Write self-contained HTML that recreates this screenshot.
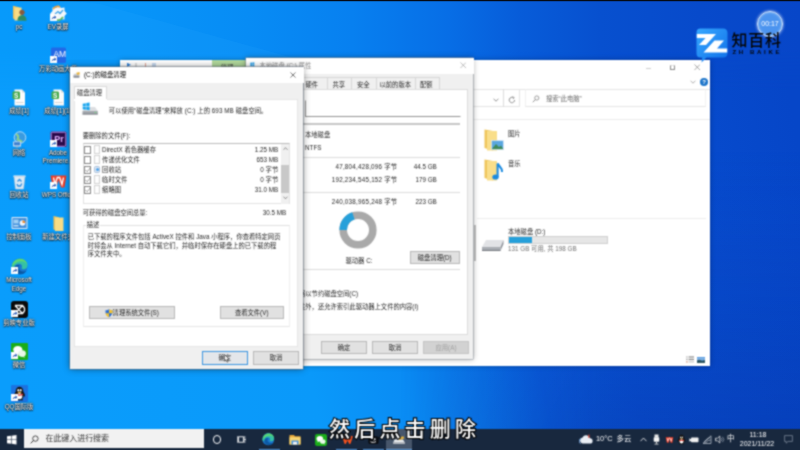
<!DOCTYPE html>
<html lang="zh-CN">
<head>
<meta charset="utf-8">
<title>磁盘清理</title>
<style>
*{box-sizing:border-box;margin:0;padding:0}
html,body{width:800px;height:450px;overflow:hidden}
body{position:relative;font-family:"Liberation Sans","Noto Sans CJK SC",sans-serif;font-size:6.3px;color:#262626;
 background:#0a5fd8;}
.abs{position:absolute}
#stage{position:absolute;left:0;top:0;width:800px;height:450px;filter:url(#soft)}
#bg{position:absolute;left:0;top:0;width:800px;height:450px}
.t{position:absolute;white-space:nowrap;line-height:1}
.ico{position:absolute;width:17px;height:17px}
.lbl{position:absolute;width:60px;text-align:center;color:#fff;font-size:6.3px;line-height:8.5px;text-shadow:0 0 1px #000,0 0 2px rgba(0,0,0,.9),0 0.6px 1.2px #000;white-space:nowrap}
.win{position:absolute;background:#f0f0f0}
.btn{position:absolute;background:#e1e1e1;border:0.6px solid #b8b8b8;text-align:center;font-size:6.3px;line-height:12px;height:13.5px;color:#262626;white-space:nowrap}
.cb{position:absolute;width:7.5px;height:7.5px;border:0.5px solid #858585;background:#fff}
.doc{position:absolute;width:5.6px;height:8.4px;background:#fdfdfd;border:0.5px solid #d2d2d2}
</style>
</head>
<body>
<!-- wallpaper -->
<svg id="bg" viewBox="0 0 800 450">
 <defs>
  <linearGradient id="g1" gradientUnits="userSpaceOnUse" x1="0" y1="296" x2="800" y2="154">
   <stop offset="0" stop-color="#0a9dfc"/>
   <stop offset="0.36" stop-color="#0a99fa"/>
   <stop offset="0.47" stop-color="#0a8cf4"/>
   <stop offset="0.56" stop-color="#0a74e7"/>
   <stop offset="0.64" stop-color="#095cdb"/>
   <stop offset="0.75" stop-color="#0850d2"/>
   <stop offset="1" stop-color="#0646c8"/>
  </linearGradient>
  <linearGradient id="gt" gradientUnits="userSpaceOnUse" x1="0" y1="0" x2="800" y2="0">
   <stop offset="0" stop-color="#079afb"/>
   <stop offset="0.125" stop-color="#0797fa"/>
   <stop offset="0.31" stop-color="#078cf5"/>
   <stop offset="0.44" stop-color="#0780f0"/>
   <stop offset="0.56" stop-color="#076ee6"/>
   <stop offset="0.65" stop-color="#075cd9"/>
   <stop offset="0.75" stop-color="#0750cf"/>
   <stop offset="0.875" stop-color="#074acb"/>
   <stop offset="1" stop-color="#0746c8"/>
  </linearGradient>
  <linearGradient id="gm" x1="0" y1="0" x2="0" y2="1"><stop offset="0.55" stop-color="#fff"/><stop offset="1" stop-color="#000"/></linearGradient>
  <mask id="mt"><rect width="800" height="90" fill="url(#gm)"/></mask>
  <linearGradient id="g2" x1="0" y1="0" x2="0" y2="1">
   <stop offset="0" stop-color="#0a40c0" stop-opacity="0"/>
   <stop offset="1" stop-color="#062c98" stop-opacity="0.34"/>
  </linearGradient>
  <linearGradient id="g4" x1="0" y1="0" x2="1" y2="0"><stop offset="0.5" stop-color="#000"/><stop offset="0.75" stop-color="#fff"/></linearGradient>
  <mask id="mk"><rect width="800" height="450" fill="url(#g4)"/></mask>
  <linearGradient id="g3" gradientUnits="userSpaceOnUse" x1="0" y1="60" x2="60" y2="0">
   <stop offset="0.3" stop-color="#30b0ff" stop-opacity="0.22"/>
   <stop offset="1" stop-color="#30b0ff" stop-opacity="0"/>
  </linearGradient>
 </defs>
 <rect width="800" height="450" fill="url(#g1)"/>
 <rect width="800" height="90" fill="url(#gt)" mask="url(#mt)"/>
 <polygon points="60,0 100,4 300,60 60,60" fill="#2aaaff" opacity="0.16"/>
 <rect x="0" y="150" width="800" height="300" fill="url(#g2)" mask="url(#mk)"/>
 <rect width="800" height="1.2" fill="#050a14"/>
</svg>

<svg width="0" height="0" style="position:absolute"><filter id="soft" x="0" y="0" width="1" height="1" color-interpolation-filters="sRGB"><feConvolveMatrix order="3" kernelMatrix="1 2 1 2 6 2 1 2 1" divisor="18" edgeMode="duplicate"/></filter></svg>
<div id="stage">
<!-- DESKTOP SHORTCUTS -->
<div class="ico" style="left:10.5px;top:4.5px"><svg width="17" height="17" viewBox="0 0 17 17"><path d="M2 0.8L8 2.2V15.5L2 13.5Z" fill="#eec25a"/><path d="M3.5 2.5H10.5V15.5H3.5Z" fill="#f8dc85"/><circle cx="11" cy="7.3" r="2.6" fill="#8a5a3c"/><path d="M6.5 15.8C6.5 11.8 8.5 10.3 11 10.3C13.5 10.3 15.5 11.8 15.5 15.8Z" fill="#2f8a62"/></svg></div><div class="lbl" style="left:-11px;top:22.5px">pc</div>
<div class="ico" style="left:49.5px;top:4.5px"><svg width="17" height="17" viewBox="0 0 17 17"><path d="M8.5 0.5L11 3L14.5 2.5L14.5 6L16.8 8.5L14.5 11L14.5 14.5L11 14L8.5 16.5L6 14L2.5 14.5L2.5 11L0.2 8.5L2.5 6L2.5 2.5L6 3Z" fill="#f4f8fb"/><path d="M3 4C5 1.5 8 1 10 2" stroke="#f2a13a" stroke-width="1.6" fill="none"/><path d="M13 12C11 15 8 15.5 6 14.5" stroke="#5cb85c" stroke-width="1.6" fill="none"/><path d="M5 9L8 6.5L10 8.5L13 5" stroke="#3aa0e8" stroke-width="1.2" fill="none"/></svg><svg style="position:absolute;left:0.2px;top:9px" width="7" height="7" viewBox="0 0 7 7"><rect width="7" height="7" fill="#fff"/><path d="M1.5 5.8C1.8 3.8 3 2.8 4.6 2.8V1.3L6.3 3.3L4.6 5.1V3.9C3.3 3.9 2.3 4.5 1.5 5.8Z" fill="#1b4fb0"/></svg></div><div class="lbl" style="left:28px;top:22.5px">EV录屏</div>
<div class="ico" style="left:49.5px;top:46.5px"><svg width="17" height="17" viewBox="0 0 17 17"><rect x="1" y="0.5" width="15" height="15.5" rx="1.5" fill="#2268e6"/><text x="9.8" y="9.5" font-family="Liberation Sans,sans-serif" font-size="8.5" fill="#fff" text-anchor="middle">AM</text></svg><svg style="position:absolute;left:0.2px;top:9px" width="7" height="7" viewBox="0 0 7 7"><rect width="7" height="7" fill="#fff"/><path d="M1.5 5.8C1.8 3.8 3 2.8 4.6 2.8V1.3L6.3 3.3L4.6 5.1V3.9C3.3 3.9 2.3 4.5 1.5 5.8Z" fill="#1b4fb0"/></svg></div><div class="lbl" style="left:28px;top:64.5px">万彩动画大师</div>
<div class="ico" style="left:10.5px;top:88.5px"><svg width="17" height="17" viewBox="0 0 17 17"><path d="M3.5 0.5H11L14 3.5V16.5H3.5Z" fill="#fbfbfb"/><path d="M11 0.5V3.5H14Z" fill="#dcdcdc"/><rect x="1.5" y="2.5" width="7.5" height="7.5" rx="1.2" fill="#43a84a"/><text x="5.2" y="8.6" font-family="Liberation Sans,sans-serif" font-size="6.5" font-weight="bold" fill="#fff" text-anchor="middle">S</text><path d="M5 13.5H12.5" stroke="#d5d5d5" stroke-width="1"/></svg></div><div class="lbl" style="left:-11px;top:106.5px">成绩[1]</div>
<div class="ico" style="left:49.5px;top:88.5px"><svg width="17" height="17" viewBox="0 0 17 17"><path d="M3.5 0.5H11L14 3.5V16.5H3.5Z" fill="#fbfbfb"/><path d="M11 0.5V3.5H14Z" fill="#dcdcdc"/><rect x="1.5" y="2.5" width="7.5" height="7.5" rx="1.2" fill="#43a84a"/><text x="5.2" y="8.6" font-family="Liberation Sans,sans-serif" font-size="6.5" font-weight="bold" fill="#fff" text-anchor="middle">S</text><path d="M5 13.5H12.5" stroke="#d5d5d5" stroke-width="1"/></svg></div><div class="lbl" style="left:28px;top:106.5px">成绩[1](1)</div>
<div class="ico" style="left:10.5px;top:130.5px"><svg width="17" height="17" viewBox="0 0 17 17"><circle cx="9" cy="6.5" r="5.8" fill="#3a9be0"/><path d="M5 3C7 4 8 6 6.5 8.5C8 9.5 10 9 11 11" stroke="#8fd08a" stroke-width="2" fill="none"/><ellipse cx="9" cy="6.5" rx="5.8" ry="5.8" fill="none" stroke="#d6ecfa" stroke-width="0.8"/><rect x="2" y="10.5" width="8" height="5" rx="0.6" fill="#dfe8f2"/><rect x="2.8" y="11.2" width="6.4" height="3.2" fill="#3b7fd0"/><rect x="4.5" y="15.5" width="3" height="1" fill="#aab4c0"/></svg></div><div class="lbl" style="left:-11px;top:148.5px">网络</div>
<div class="ico" style="left:49.5px;top:130.5px"><svg width="17" height="17" viewBox="0 0 17 17"><rect x="0.5" y="0.5" width="16" height="15.5" rx="1.5" fill="#2a0a4a"/><rect x="1.2" y="1.2" width="14.6" height="14.1" rx="1.2" fill="none" stroke="#d9a0ff" stroke-width="0.9"/><text x="9" y="11.2" font-family="Liberation Sans,sans-serif" font-size="9" font-weight="bold" fill="#e3b4ff" text-anchor="middle">Pr</text></svg><svg style="position:absolute;left:0.2px;top:9px" width="7" height="7" viewBox="0 0 7 7"><rect width="7" height="7" fill="#fff"/><path d="M1.5 5.8C1.8 3.8 3 2.8 4.6 2.8V1.3L6.3 3.3L4.6 5.1V3.9C3.3 3.9 2.3 4.5 1.5 5.8Z" fill="#1b4fb0"/></svg></div><div class="lbl" style="left:28px;top:148.5px">Adobe<br>Premiere...</div>
<div class="ico" style="left:10.5px;top:173px"><svg width="17" height="17" viewBox="0 0 17 17"><path d="M3 3.5H14L12.5 16H4.5Z" fill="#e9eff5" opacity="0.95"/><path d="M2.5 2.5H14.5V4H2.5Z" fill="#f7fafc"/><path d="M3 3.5H14L12.5 16H4.5Z" fill="none" stroke="#b8c6d4" stroke-width="0.6"/><path d="M6.5 8.5L8.5 6.5L10.5 8.5M10.8 10.5L9.5 13H7L6 11" stroke="#2c8de0" stroke-width="1.3" fill="none"/></svg></div><div class="lbl" style="left:-11px;top:191.0px">回收站</div>
<div class="ico" style="left:49.5px;top:173px"><svg width="17" height="17" viewBox="0 0 17 17"><path d="M0.5 2.5H16.5L14.5 14.5H11L8.5 7L6.5 14.5H3Z" fill="#f03a22"/><path d="M3.5 4.5L5 11.5L7.3 4.5H9.7L12 11.5L13.5 4.5" stroke="#fff" stroke-width="1.3" fill="none"/></svg><svg style="position:absolute;left:0.2px;top:9px" width="7" height="7" viewBox="0 0 7 7"><rect width="7" height="7" fill="#fff"/><path d="M1.5 5.8C1.8 3.8 3 2.8 4.6 2.8V1.3L6.3 3.3L4.6 5.1V3.9C3.3 3.9 2.3 4.5 1.5 5.8Z" fill="#1b4fb0"/></svg></div><div class="lbl" style="left:28px;top:191.0px">WPS Office</div>
<div class="ico" style="left:10.5px;top:215px"><svg width="17" height="17" viewBox="0 0 17 17"><rect x="0.5" y="2" width="16" height="12" rx="0.8" fill="#dfeaf6"/><rect x="1.5" y="3" width="14" height="10" fill="#3f8fdc"/><rect x="2.5" y="4.5" width="5" height="4" fill="#9fd0f5"/><circle cx="11.5" cy="8" r="2.8" fill="#f2f6fa"/><path d="M11.5 8V5.2A2.8 2.8 0 0 1 14.3 8Z" fill="#ef8a2c"/><rect x="2.5" y="10" width="5" height="1.5" fill="#bfe0f8"/></svg></div><div class="lbl" style="left:-11px;top:233.0px">控制面板</div>
<div class="ico" style="left:49.5px;top:215px"><svg width="17" height="17" viewBox="0 0 17 17"><path d="M3.5 1L9 2.2V16L3.5 14.5Z" fill="#eec25a"/><path d="M5 2.5H13.5V16H5Z" fill="#f8dc85"/></svg></div><div class="lbl" style="left:28px;top:233.0px">新建文件夹</div>
<div class="ico" style="left:10.5px;top:258px"><svg width="17" height="17" viewBox="0 0 17 17"><circle cx="8.5" cy="8.5" r="8" fill="#1a78d0"/><path d="M0.7 9.5C0.5 4 4.5 0.5 9 0.5C13.5 0.5 16.5 4 16.5 7.5C16.5 10 14.8 11.3 12.8 11.3C11 11.3 10.3 10.4 10.8 9.5C11.6 8 10.5 5.8 8 5.8C4.5 5.8 2.8 8.5 3.3 11.5C1.6 10.8 0.8 10.2 0.7 9.5Z" fill="#35c1a5"/><path d="M3.2 10.5C3.2 14 6.5 16.5 10 16.3C12.5 16.1 14.5 14.8 15.6 12.8C13.5 14 10 13.8 8.3 11.8C7 10.2 7.3 8 8.8 7C5.5 6.5 3.2 8 3.2 10.5Z" fill="#0c59a4"/><path d="M1.5 6C3 2 7 0.5 10.5 1C14 1.7 16.3 4.5 16.4 7.5C16 5 13.5 3.4 10.5 3.3C6.5 3.2 3 5 1.5 9Z" fill="#6fe05a" opacity="0.75"/></svg><svg style="position:absolute;left:0.2px;top:9px" width="7" height="7" viewBox="0 0 7 7"><rect width="7" height="7" fill="#fff"/><path d="M1.5 5.8C1.8 3.8 3 2.8 4.6 2.8V1.3L6.3 3.3L4.6 5.1V3.9C3.3 3.9 2.3 4.5 1.5 5.8Z" fill="#1b4fb0"/></svg></div><div class="lbl" style="left:-11px;top:276.0px">Microsoft<br>Edge</div>
<div class="ico" style="left:10.5px;top:301px"><svg width="17" height="17" viewBox="0 0 17 17"><rect width="17" height="17" rx="3" fill="#0a0a0a"/><path d="M4 4.5H11.5L13.5 7M4 12.5H11.5L13.5 10M4 4.5L11.5 12.5M4 12.5L11.5 4.5M13.5 7V10" stroke="#fff" stroke-width="1.3" fill="none"/></svg><svg style="position:absolute;left:0.2px;top:9px" width="7" height="7" viewBox="0 0 7 7"><rect width="7" height="7" fill="#fff"/><path d="M1.5 5.8C1.8 3.8 3 2.8 4.6 2.8V1.3L6.3 3.3L4.6 5.1V3.9C3.3 3.9 2.3 4.5 1.5 5.8Z" fill="#1b4fb0"/></svg></div><div class="lbl" style="left:-11px;top:319.0px">剪映专业版</div>
<div class="ico" style="left:10.5px;top:342.5px"><svg width="17" height="17" viewBox="0 0 17 17"><rect width="17" height="17" rx="1" fill="#1aad19"/><ellipse cx="6.8" cy="6.8" rx="4.6" ry="3.9" fill="#fff"/><path d="M4 9.5L3.5 12L6 10.4Z" fill="#fff"/><ellipse cx="11" cy="10.6" rx="3.9" ry="3.3" fill="#e9f7e8"/><path d="M13 13L13.8 14.8L11.5 13.7Z" fill="#e9f7e8"/></svg><svg style="position:absolute;left:0.2px;top:9px" width="7" height="7" viewBox="0 0 7 7"><rect width="7" height="7" fill="#fff"/><path d="M1.5 5.8C1.8 3.8 3 2.8 4.6 2.8V1.3L6.3 3.3L4.6 5.1V3.9C3.3 3.9 2.3 4.5 1.5 5.8Z" fill="#1b4fb0"/></svg></div><div class="lbl" style="left:-11px;top:360.5px">微信</div>
<div class="ico" style="left:10.5px;top:385px"><svg width="17" height="17" viewBox="0 0 17 17"><rect width="17" height="17" rx="1" fill="#1b73e0"/><path d="M8.5 1.8C11.2 1.8 12.3 4 12.3 6.8C13.6 8.5 14.2 10.3 13.8 11.6C13.3 11.8 12.8 11 12.6 10.6C12.6 12.5 11.8 13.5 11 14C12 14.3 12.3 15 11.8 15.2H5.2C4.7 15 5 14.3 6 14C5.2 13.5 4.4 12.5 4.4 10.6C4.2 11 3.7 11.8 3.2 11.6C2.8 10.3 3.4 8.5 4.7 6.8C4.7 4 5.8 1.8 8.5 1.8Z" fill="#111"/><ellipse cx="8.5" cy="11.3" rx="2.8" ry="3" fill="#fff"/><path d="M5 8.6C7 9.8 10 9.8 12 8.6L12.2 9.8C10 11 7 11 4.8 9.8Z" fill="#e6312a"/><ellipse cx="7.3" cy="5.3" rx="0.9" ry="1.3" fill="#fff"/><ellipse cx="9.7" cy="5.3" rx="0.9" ry="1.3" fill="#fff"/><ellipse cx="8.5" cy="7.4" rx="2" ry="0.7" fill="#f5a623"/></svg><svg style="position:absolute;left:0.2px;top:9px" width="7" height="7" viewBox="0 0 7 7"><rect width="7" height="7" fill="#fff"/><path d="M1.5 5.8C1.8 3.8 3 2.8 4.6 2.8V1.3L6.3 3.3L4.6 5.1V3.9C3.3 3.9 2.3 4.5 1.5 5.8Z" fill="#1b4fb0"/></svg></div><div class="lbl" style="left:-11px;top:403.0px">QQ国际版</div>

<!-- EXPLORER WINDOW -->
<div class="win" id="exp" style="left:120px;top:60px;width:590px;height:306px;background:#fff;box-shadow:0 0 5px rgba(0,0,0,.3)">
 <!-- quick access bits -->
 <div class="abs" style="left:6.5px;top:2.5px;width:4.5px;height:4.5px;background:#2d7fd6;clip-path:polygon(0 0,100% 50%,0 100%)"></div>
 <div class="abs" style="left:14.5px;top:3px;width:2px;height:4px;background:#dcdcdc"></div>
 <div class="abs" style="left:24.5px;top:3px;width:1.8px;height:4px;background:#e0a090"></div>
 <div class="abs" style="left:32px;top:3px;width:4px;height:4px;background:#c5d8ee"></div>
 <div class="abs" style="left:91.5px;top:0;width:34.5px;height:12px;background:#b2d99c"></div>
 <div class="t" style="left:101px;top:4.6px;font-size:6.3px;color:#444">管理</div>
 <!-- window controls -->
 <div class="abs" style="left:525.5px;top:7.5px;width:5.5px;height:0.7px;background:#cfcfcf"></div>
 <div class="abs" style="left:549.5px;top:4.5px;width:5.5px;height:5.5px;border:0.8px solid #8e8e8e;border-top-color:#e2e2e2"></div>
 <svg class="abs" style="left:573.5px;top:4px" width="6.5" height="6.5" viewBox="0 0 7 7"><path d="M0.5 0.5L6.5 6.5M6.5 0.5L0.5 6.5" stroke="#8a8a8a" stroke-width="0.8" fill="none"/></svg>
 <!-- ribbon row -->
 <svg class="abs" style="left:570px;top:19.5px" width="6" height="4" viewBox="0 0 6 4"><path d="M0.5 0.7L3 3.2L5.5 0.7" stroke="#9a9a9a" stroke-width="0.8" fill="none"/></svg>
 <div class="abs" style="left:580px;top:17.5px;width:8px;height:8px;border-radius:50%;background:#1b74c9;color:#fff;font-size:6px;line-height:8px;text-align:center;font-weight:bold">?</div>
 <div class="abs" style="left:0;top:29px;width:590px;height:0.6px;background:#e4e4e4"></div>
 <!-- address row -->
 <div class="abs" style="left:352px;top:29.3px;width:48px;height:17.5px;border:0.6px solid #e4e4e4;border-left:none"></div>
 <svg class="abs" style="left:372.5px;top:37.5px" width="6" height="4" viewBox="0 0 6 4"><path d="M0.5 0.7L3 3.2L5.5 0.7" stroke="#777" stroke-width="0.8" fill="none"/></svg>
 <div class="abs" style="left:383.3px;top:29.3px;width:0.6px;height:17.5px;background:#dcdcdc"></div>
 <svg class="abs" style="left:388px;top:35.5px" width="8" height="8" viewBox="0 0 8 8"><path d="M6.6 4A2.7 2.7 0 1 1 5.4 1.75" stroke="#777" stroke-width="0.8" fill="none"/><path d="M4.4 0.6L6.2 1.6L5 3.1" stroke="#777" stroke-width="0.7" fill="none"/></svg>
 <div class="abs" style="left:405px;top:29.3px;width:181px;height:17.5px;border:0.6px solid #e6e6e6;border-left-color:#f0f0f0;border-right-color:#f2f2f2"></div>
 <svg class="abs" style="left:412px;top:35px" width="8" height="8" viewBox="0 0 8 8"><circle cx="4.8" cy="3" r="2.1" stroke="#777" stroke-width="0.7" fill="none"/><path d="M3.3 4.6L0.8 7.2" stroke="#777" stroke-width="0.8"/></svg>
 <div class="t" style="left:426px;top:36px;font-size:6.3px;color:#6d6d6d">搜索“此电脑”</div>
 <div class="abs" style="left:352px;top:58.5px;width:238px;height:0.6px;background:#ececec"></div>
 <!-- folders -->
 <svg class="abs" style="left:364px;top:67.5px" width="22" height="24" viewBox="0 0 22 24"><path d="M0.5 1.5L9 3V22.5L0.5 20Z" fill="#efc65c"/><path d="M3 3H13V22.5H3Z" fill="#f9de8a"/><rect x="7.5" y="12.5" width="12" height="9" fill="#5aa7e0"/><path d="M7.5 21.5L12 16L15 19L17 17.5L19.5 21.5Z" fill="#3f8a5a"/><rect x="7.5" y="12.5" width="12" height="9" fill="none" stroke="#e8f0f8" stroke-width="0.6"/></svg>
 <div class="t" style="left:388px;top:71px;font-size:6.3px">图片</div>
 <svg class="abs" style="left:364px;top:97.5px" width="22" height="24" viewBox="0 0 22 24"><path d="M0.5 1.5L9 3V22.5L0.5 20Z" fill="#efc65c"/><path d="M3 3H13V22.5H3Z" fill="#f9de8a"/><ellipse cx="11.5" cy="19" rx="3.2" ry="2.6" fill="#1a8ae0"/><path d="M13.6 19V5.5C15 8.5 18.5 9.5 18 14" stroke="#1a8ae0" stroke-width="2.1" fill="none"/></svg>
 <div class="t" style="left:388px;top:100.5px;font-size:6.3px">音乐</div>
 <div class="abs" style="left:357px;top:157.5px;width:229px;height:0.6px;background:#ededed"></div>
 <div class="abs" style="left:354px;top:165px;width:1.6px;height:36px;background:#c2c2c2"></div>
 <!-- drive D -->
 <svg class="abs" style="left:361px;top:177px" width="24" height="17" viewBox="0 0 24 17"><path d="M5 3H22.5L19.5 10H1Z" fill="#e2e3e6"/><path d="M1 10H19.5V13.8H1Z" fill="#a9adb3"/><path d="M19.5 10L22.5 3V7L19.5 13.8Z" fill="#8d9198"/><rect x="1" y="13" width="18.5" height="0.9" fill="#6b6f77"/></svg>
 <div class="t" style="left:388px;top:168.5px;font-size:6.3px">本地磁盘 (D:)</div>
 <div class="abs" style="left:388px;top:176px;width:99.5px;height:7.5px;background:#e6e6e6;border:0.5px solid #d0d0d0"></div>
 <div class="abs" style="left:388.5px;top:176.5px;width:23px;height:6.5px;background:#26a0da"></div>
 <div class="t" style="left:388px;top:186px;font-size:6.3px;color:#6d6d6d">131 GB 可用, 共 198 GB</div>
 <!-- view icons -->
 <svg class="abs" style="left:566px;top:296px" width="8" height="7" viewBox="0 0 8 7"><path d="M0.2 1H1.6M0.2 3.4H1.6" stroke="#9a9a9a" stroke-width="1.2"/><path d="M0.2 5.8H1.6" stroke="#c98a70" stroke-width="1.2"/><path d="M2.6 1H8M2.6 3.4H8" stroke="#4a4a4a" stroke-width="0.8"/><path d="M2.6 5.8H8" stroke="#9a9a9a" stroke-width="0.7"/></svg>
 <svg class="abs" style="left:577.3px;top:297px" width="8" height="6" viewBox="0 0 8 6"><rect width="8" height="6" fill="#5a9be0"/><path d="M0 6V3.6L2.5 2.6L5 3.8L8 3V6Z" fill="#2c5560"/><rect y="1.6" width="8" height="0.8" fill="#b9d6f2"/></svg>
</div>

<!-- PROPERTIES WINDOW -->
<div class="win" id="prop" style="left:246px;top:57.5px;width:226.8px;height:301px;background:#f0f0f0;box-shadow:0 0 6px rgba(0,0,0,.35),0 0 0 0.5px #9aa3ad">
 <div class="abs" style="left:0;top:0;width:227.5px;height:16.5px;background:#fff"></div>
 <svg class="abs" style="left:3.5px;top:4px" width="8" height="8" viewBox="0 0 8 8"><path d="M0.3 0.8L2 0.5V2.2H0.3ZM2.4 0.45L4.3 0.2V2.2H2.4ZM0.3 2.6H2V4.2L0.3 4ZM2.4 2.6H4.3V4.5L2.4 4.25Z" fill="#1e9be9"/><rect x="1" y="5" width="6.8" height="2.6" rx="0.5" fill="#9a9ea6"/></svg>
 <div class="t" style="left:13.5px;top:5px;font-size:6.3px;color:#8a8a8a">本地磁盘 (C:) 属性</div>
 <svg class="abs" style="left:213.5px;top:4.5px" width="6.5" height="6.5" viewBox="0 0 7 7"><path d="M0.5 0.5L6.5 6.5M6.5 0.5L0.5 6.5" stroke="#9a9a9a" stroke-width="0.7" fill="none"/></svg>
 <!-- tabs -->
 <div class="abs" style="left:4px;top:19.5px;width:190px;height:12px;border:0.6px solid #d6d6d6;border-bottom:none;background:#f0f0f0"></div>
 <div class="abs" style="left:81px;top:19.5px;width:0.6px;height:12px;background:#d6d6d6"></div>
 <div class="abs" style="left:105px;top:19.5px;width:0.6px;height:12px;background:#d6d6d6"></div>
 <div class="abs" style="left:129.5px;top:19.5px;width:0.6px;height:12px;background:#d6d6d6"></div>
 <div class="abs" style="left:168.5px;top:19.5px;width:0.6px;height:12px;background:#d6d6d6"></div>
 <div class="t" style="left:59.5px;top:24.3px;font-size:6.3px">硬件</div>
 <div class="t" style="left:86.5px;top:24.3px;font-size:6.3px">共享</div>
 <div class="t" style="left:111px;top:24.3px;font-size:6.3px">安全</div>
 <div class="t" style="left:133.5px;top:24.3px;font-size:6.3px">以前的版本</div>
 <div class="t" style="left:174px;top:24.3px;font-size:6.3px">配额</div>
 <!-- panel -->
 <div class="abs" style="left:4px;top:31px;width:218px;height:246.5px;background:#fff;border:0.6px solid #dcdcdc"></div>
 <!-- text input -->
 <div class="abs" style="left:59px;top:42px;width:156px;height:17px;background:#fff;border:0.7px solid #fff;border-left-color:#8f8f8f;border-bottom-color:#959595"></div>
 <div class="abs" style="left:12px;top:65.8px;width:202px;height:1.3px;background:#c6c6c6"></div>
 <div class="t" style="left:59px;top:74px;font-size:6.3px">本地磁盘</div>
 <div class="t" style="left:59px;top:87.3px;font-size:6.3px">NTFS</div>
 <div class="abs" style="left:12px;top:99px;width:202px;height:0.6px;background:#dcdcdc"></div>
 <div class="t" style="right:75.5px;top:106.5px;font-size:6.3px;letter-spacing:0.22px">47,804,428,096 字节</div><div class="t" style="right:36px;top:106.5px;font-size:6.3px">44.5 GB</div>
 <div class="t" style="right:75.5px;top:119.5px;font-size:6.3px;letter-spacing:0.22px">192,234,545,152 字节</div><div class="t" style="right:36px;top:119.5px;font-size:6.3px">179 GB</div>
 <div class="abs" style="left:12px;top:134.5px;width:202px;height:0.6px;background:#dcdcdc"></div>
 <div class="t" style="right:75.5px;top:141.5px;font-size:6.3px;letter-spacing:0.22px">240,038,965,248 字节</div><div class="t" style="right:36px;top:141.5px;font-size:6.3px">223 GB</div>
 <!-- donut -->
 <svg class="abs" style="left:92px;top:152.5px" width="40" height="40" viewBox="-20 -20 40 40"><circle r="14.8" fill="none" stroke="#a9a9a9" stroke-width="7.6"/><path d="M-14.8 0A14.8 14.8 0 0 1 -4.57 -14.08" fill="none" stroke="#26a0da" stroke-width="7.6"/></svg>
 <div class="t" style="left:99.5px;top:200.3px;font-size:6.3px">驱动器 C:</div>
 <div class="btn" style="left:164px;top:193px;width:49.5px">磁盘清理(D)</div>
 <div class="abs" style="left:12px;top:211.5px;width:202px;height:0.6px;background:#dcdcdc"></div>
 <div class="t" style="left:21.5px;top:233.5px;font-size:6.3px">压缩此驱动器以节约磁盘空间(C)</div>
 <div class="t" style="left:21.5px;top:246.5px;font-size:6.3px">除了文件属性外，还允许索引此驱动器上文件的内容(I)</div>
 <div class="btn" style="left:75px;top:283px;width:46px">确定</div>
 <div class="btn" style="left:126px;top:283px;width:46px">取消</div>
 <div class="btn" style="left:177px;top:283px;width:46px;color:#a0a0a0;background:#d2d2d2;border-color:#c4c4c4">应用(A)</div>
</div>

<!-- DISK CLEANUP -->
<div class="win" id="dc" style="left:69.7px;top:67.2px;width:233.5px;height:301.8px;background:#f0f0f0;box-shadow:0 0 7px rgba(0,0,0,.45),0 0 0 0.5px #6b7a8c">
 <div class="abs" style="left:0;top:0;width:234px;height:15.8px;background:#fff"></div>
 <!-- title icon -->
 <svg class="abs" style="left:3.8px;top:4.6px" width="7.3" height="7.3" viewBox="0 0 9 9"><rect x="0.5" y="4" width="7.5" height="3" rx="0.6" fill="#8b8f96"/><rect x="1" y="2.2" width="6" height="2.2" fill="#c9ccd1"/><path d="M4 1 L8 0 L8.5 3 L5 3.5Z" fill="#e8b33a"/></svg>
 <div class="t" style="left:14.3px;top:4.6px;font-size:6.3px;color:#000">(C:)的磁盘清理</div>
 <svg class="abs" style="left:220.7px;top:4.6px" width="6" height="6" viewBox="0 0 7 7"><path d="M0.5 0.5L6.5 6.5M6.5 0.5L0.5 6.5" stroke="#222" stroke-width="0.7" fill="none"/></svg>
 <!-- tab -->
 <div class="abs" style="left:4.2px;top:19.2px;width:33.5px;height:14.8px;background:#fff;border:0.6px solid #dadada;border-bottom:none"></div>
 <div class="t" style="left:7.2px;top:23px;font-size:6.3px">磁盘清理</div>
 <!-- panel -->
 <div class="abs" style="left:4px;top:32px;width:224px;height:247.6px;background:#fff;border:0.6px solid #e6e6e6"></div>
 <div class="abs" style="left:4.8px;top:31.5px;width:32.3px;height:2px;background:#fff"></div>
 <!-- drive icon -->
 <svg class="abs" style="left:12.3px;top:34.5px" width="16" height="14" viewBox="0 0 16 14"><path d="M3 5H13L15.8 9H0.5Z" fill="#dcdee1"/><path d="M0.5 9H15.8V12.3H0.5Z" fill="#a4a8ae"/><rect x="0.5" y="11.6" width="15.3" height="0.9" fill="#6e737a"/><rect x="12.6" y="10" width="1.8" height="0.9" fill="#7fe08a"/><path d="M0.7 1.7L3.8 1.2V4.2H0.7ZM4.3 1.1L7.6 0.6V4.2H4.3ZM0.7 4.7H3.8V7.7L0.7 7.3ZM4.3 4.7H7.6V8.3L4.3 7.8Z" fill="#18a5ee"/></svg>
 <div class="t" style="left:39px;top:40.8px;font-size:6.3px;letter-spacing:0.06px">可以使用“磁盘清理”来释放 (C:) 上的 693 MB 磁盘空间。</div>
 <div class="t" style="left:13px;top:65.5px;font-size:6.3px">要删除的文件(F):</div>
 <!-- list -->
 <div class="abs" style="left:13px;top:76px;width:207px;height:61px;background:#fff;border:0.6px solid #e2e2e2;border-top-color:#bcbcbc"></div>
 <div class="cb" style="left:14.2px;top:79.0px"></div><div class="doc" style="left:24.6px;top:78.3px"></div><div class="t" style="left:32.4px;top:80px;font-size:6.3px">DirectX 着色器缓存</div><div class="t" style="right:25px;top:80px;font-size:6.3px">1.25 MB</div>
 <div class="cb" style="left:14.2px;top:89.0px"></div><div class="doc" style="left:24.6px;top:88.3px"></div><div class="t" style="left:32.4px;top:90px;font-size:6.3px">传递优化文件</div><div class="t" style="right:25px;top:90px;font-size:6.3px">653 MB</div>
 <div class="cb" style="left:14.2px;top:99.0px"></div><div class="abs" style="left:24.6px;top:98.8px;width:5.6px;height:7.5px;background:#dfe9f5;border:0.5px solid #a9bfd8;border-radius:1.5px"></div><div class="abs" style="left:26px;top:101px;width:3px;height:3px;border-radius:50%;background:#4a9fe8"></div><div class="t" style="left:32.4px;top:100px;font-size:6.3px">回收站</div><div class="t" style="right:25px;top:100px;font-size:6.3px">0 字节</div>
 <div class="cb" style="left:14.2px;top:109.0px"></div><div class="doc" style="left:24.6px;top:108.3px"></div><div class="t" style="left:32.4px;top:110px;font-size:6.3px">临时文件</div><div class="t" style="right:25px;top:110px;font-size:6.3px">0 字节</div>
 <div class="cb" style="left:14.2px;top:119.0px"></div><div class="doc" style="left:24.6px;top:118.3px"></div><div class="t" style="left:32.4px;top:120px;font-size:6.3px">缩略图</div><div class="t" style="right:25px;top:120px;font-size:6.3px">31.0 MB</div>
 <svg class="abs" style="left:14.2px;top:99px" width="8" height="28" viewBox="0 0 8 28"><path d="M1.5 4L3.2 5.8L6.3 1.8M1.5 14L3.2 15.8L6.3 11.8M1.5 24L3.2 25.8L6.3 21.8" stroke="#666" stroke-width="0.65" fill="none"/></svg>
 <!-- scrollbar -->
 <div class="abs" style="left:211.8px;top:76.6px;width:7.8px;height:59.8px;background:#f0f0f0"></div>
 <div class="abs" style="left:211.8px;top:98px;width:7.8px;height:28px;background:#c8c8c8"></div>
 <svg class="abs" style="left:213.2px;top:79.5px" width="5" height="3.5" viewBox="0 0 6 4"><path d="M0.5 3.3L3 0.8L5.5 3.3" stroke="#555" stroke-width="0.8" fill="none"/></svg>
 <svg class="abs" style="left:213.2px;top:128.5px" width="5" height="3.5" viewBox="0 0 6 4"><path d="M0.5 0.7L3 3.2L5.5 0.7" stroke="#555" stroke-width="0.8" fill="none"/></svg>
 <div class="t" style="left:13px;top:142.5px;font-size:6.3px">可获得的磁盘空间总量:</div>
 <div class="t" style="right:17px;top:142.5px;font-size:6.3px">30.5 MB</div>
 <!-- group -->
 <div class="abs" style="left:13px;top:158px;width:207px;height:101.5px;border:0.6px solid #efefef;border-top-color:#e0e0e0;border-bottom-color:#e6e6e6"></div>
 <div class="t" style="left:16px;top:154.5px;font-size:6.3px;background:#fff;padding:0 1px">描述</div>
 <div class="t" style="left:18px;top:166.3px;font-size:6.3px;line-height:8.2px;white-space:normal;width:198px">已下载的程序文件包括 ActiveX 控件和 Java 小程序，你查看特定网页<br>时将会从 Internet 自动下载它们，并临时保存在硬盘上的已下载的程<br>序文件夹中。</div>
 <div class="btn" style="left:19px;top:238.8px;width:86.5px"><svg style="position:absolute;left:15px;top:2.3px" width="8" height="8.5" viewBox="0 0 8 8.5"><path d="M4 0.2C5 1 6.3 1.3 7.6 1.3C7.6 4.8 6.6 7 4 8.3C1.4 7 0.4 4.8 0.4 1.3C1.7 1.3 3 1 4 0.2Z" fill="#2f6fd0"/><path d="M4 0.2C5 1 6.3 1.3 7.6 1.3V4.2H4Z" fill="#f2c232"/><path d="M0.45 4.2H4V8.3C1.7 7.2 0.7 5.7 0.45 4.2Z" fill="#f2c232"/></svg><span style="margin-left:7.5px">清理系统文件(S)</span></div>
 <div class="btn" style="left:150px;top:238.8px;width:64px">查看文件(V)</div>
 <!-- ok cancel -->
 <div class="btn" style="left:132px;top:284px;width:46px;border:1.1px solid #3a94e0;background:#e3e6ea;line-height:11px">确定</div>
 <div class="btn" style="left:183.5px;top:284px;width:45.5px">取消</div>
 <!-- cursor -->
 <svg class="abs" style="left:154.3px;top:287.3px" width="6" height="9" viewBox="0 0 8 12"><path d="M0.6 0.6V9.4L2.6 7.6L4 10.9L5.4 10.3L4 7.1H6.8Z" fill="#fff" stroke="#111" stroke-width="0.7"/></svg>
</div>

<!-- TASKBAR -->
<div class="abs" id="tb" style="left:0;top:428.5px;width:800px;height:21.5px;background:#18283e;box-shadow:0 6px 0 #18283e,-6px 0 0 #18283e,6px 0 0 #18283e,-6px 6px 0 #18283e,6px 6px 0 #18283e">
 <svg class="abs" style="left:7px;top:6.5px" width="9.5" height="9.5" viewBox="0 0 10 10"><path d="M0 1.4L4.2 0.8V4.7H0ZM4.8 0.7L10 0V4.7H4.8ZM0 5.3H4.2V9.2L0 8.6ZM4.8 5.3H10V10L4.8 9.3Z" fill="#fff"/></svg>
 <div class="abs" style="left:24.2px;top:0.6px;width:180px;height:19.4px;background:#f2f2f2"></div>
 <svg class="abs" style="left:29.7px;top:6px" width="9" height="9" viewBox="0 0 9 9"><circle cx="5.4" cy="3.6" r="2.7" stroke="#222" stroke-width="0.8" fill="none"/><path d="M3.5 5.5L0.7 8.3" stroke="#222" stroke-width="0.9"/></svg>
 <div class="t" style="left:45.5px;top:6.3px;font-size:7.95px;color:#333">在此键入进行搜索</div>
 <div class="abs" style="left:213px;top:6.8px;width:8.4px;height:8.4px;border-radius:50%;border:1.3px solid #fff"></div>
 <svg class="abs" style="left:236.5px;top:6.5px" width="10" height="9" viewBox="0 0 10 9"><rect x="1.6" y="1.8" width="4.8" height="5.4" fill="none" stroke="#fff" stroke-width="0.9"/><path d="M0.3 1.2V7.8M7.8 1.2V3.5M7.8 5.5V7.8" stroke="#fff" stroke-width="0.8"/><rect x="7.2" y="3.8" width="1.6" height="1.4" fill="#fff"/></svg>
 <!-- edge -->
 <svg class="abs" style="left:262px;top:4.5px" width="12.5" height="12.5" viewBox="0 0 17 17"><circle cx="8.5" cy="8.5" r="8" fill="#1a78d0"/><path d="M0.7 9.5C0.5 4 4.5 0.5 9 0.5C13.5 0.5 16.5 4 16.5 7.5C16.5 10 14.8 11.3 12.8 11.3C11 11.3 10.3 10.4 10.8 9.5C11.6 8 10.5 5.8 8 5.8C4.5 5.8 2.8 8.5 3.3 11.5C1.6 10.8 0.8 10.2 0.7 9.5Z" fill="#35c1a5"/><path d="M3.2 10.5C3.2 14 6.5 16.5 10 16.3C12.5 16.1 14.5 14.8 15.6 12.8C13.5 14 10 13.8 8.3 11.8C7 10.2 7.3 8 8.8 7C5.5 6.5 3.2 8 3.2 10.5Z" fill="#0c59a4"/><path d="M1.5 6C3 2 7 0.5 10.5 1C14 1.7 16.3 4.5 16.4 7.5C16 5 13.5 3.4 10.5 3.3C6.5 3.2 3 5 1.5 9Z" fill="#6fe05a" opacity="0.75"/></svg>
 <div class="abs" style="left:259px;top:20.2px;width:21px;height:1.3px;background:#5aa0e8"></div>
 <!-- explorer -->
 <svg class="abs" style="left:288.5px;top:5.5px" width="12" height="11" viewBox="0 0 12 11"><path d="M0.5 1H5L6 2.2H11.5V10.5H0.5Z" fill="#e8a93a"/><rect x="0.5" y="3.2" width="11" height="7.3" fill="#f8d572"/><rect x="2.5" y="6.5" width="7" height="4" fill="#3f8fdc"/><rect x="4" y="7.8" width="4" height="2.7" fill="#f3f3f3"/></svg>
 <!-- wechat -->
 <svg class="abs" style="left:314.5px;top:5px" width="12" height="12" viewBox="0 0 17 17"><rect width="17" height="17" rx="3" fill="#1aad19"/><ellipse cx="6.8" cy="6.8" rx="4.6" ry="3.9" fill="#fff"/><path d="M4 9.5L3.5 12L6 10.4Z" fill="#fff"/><ellipse cx="11" cy="10.6" rx="3.9" ry="3.3" fill="#e9f7e8"/><path d="M13 13L13.8 14.8L11.5 13.7Z" fill="#e9f7e8"/></svg>
 <!-- wps -->
 <svg class="abs" style="left:341.5px;top:6.5px" width="11" height="9" viewBox="0 0 11 9"><path d="M1 1L3.2 8L5.5 3.2L7.8 8L10 1" stroke="#f4511e" stroke-width="1.9" fill="none" stroke-linejoin="round"/></svg>
 <div class="abs" style="left:336px;top:20.2px;width:20.5px;height:1.3px;background:#5aa0e8"></div>
 <!-- disk cleanup task -->
 <svg class="abs" style="left:367.5px;top:7px" width="11" height="8.5" viewBox="0 0 11 8.5"><rect x="0.3" y="0.3" width="10.4" height="7.9" rx="2.2" fill="#0a0d12"/><path d="M2.5 5.8C4 6.6 6.5 6.6 8 5.6M5 2.2L7.5 3.2L5.6 4.2" stroke="#f2f2f2" stroke-width="1" fill="none"/></svg>
 <div class="abs" style="left:362.5px;top:20.2px;width:21.5px;height:1.3px;background:#5aa0e8"></div>
 <div class="abs" style="left:386px;top:0;width:25.5px;height:21.5px;background:#47566b"></div>
 <svg class="abs" style="left:392.5px;top:7px" width="12" height="8.5" viewBox="0 0 12 8.5"><path d="M1.5 3.5H10L11.5 6V8H0.5V6Z" fill="#e9ebee"/><rect x="0.5" y="6" width="11" height="2" fill="#b3b8be"/><path d="M5 1.5L10.5 0.3L11.3 2.6L6.2 4Z" fill="#e3b341"/><path d="M2.5 3.8L6 2.4" stroke="#d0d4d9" stroke-width="1"/></svg>
 <div class="abs" style="left:386px;top:20.2px;width:25.5px;height:1.3px;background:#6fb0f2"></div>
 <!-- tray -->
 <svg class="abs" style="left:578.5px;top:5.5px" width="14" height="10" viewBox="0 0 14 10"><path d="M3.5 9.5A3 3 0 0 1 3.5 3.6A4 4 0 0 1 11 4.3A2.6 2.6 0 0 1 11 9.5Z" fill="#e9eef5"/><path d="M1.5 9.5A2.5 2.5 0 0 1 2 4.8" stroke="#7fb2ee" stroke-width="1" fill="none"/><rect x="9.3" y="0.6" width="1.2" height="3.4" fill="#e04a3a"/></svg>
 <div class="t" style="left:596px;top:6.5px;font-size:7.4px;color:#fff">10°C&nbsp; 多云</div>
 <svg class="abs" style="left:640px;top:8px" width="7" height="5" viewBox="0 0 7 5"><path d="M0.5 4.2L3.5 1L6.5 4.2" stroke="#fff" stroke-width="0.8" fill="none"/></svg>
 <svg class="abs" style="left:652.5px;top:5.5px" width="7" height="11" viewBox="0 0 7 11"><rect x="1.5" y="0.5" width="4" height="3" fill="#e8e8e8"/><rect x="0.7" y="3.2" width="5.6" height="4.5" rx="0.7" fill="#f5f5f5"/><rect x="3" y="7.7" width="1" height="2" fill="#ddd"/><rect x="1.5" y="9.6" width="4" height="0.9" fill="#ddd"/></svg>
 <svg class="abs" style="left:664.5px;top:7px" width="9" height="8" viewBox="0 0 17 17"><path d="M0.5 2.5H16.5L14.5 14.5H11L8.5 7L6.5 14.5H3Z" fill="#f03a22"/><path d="M3.5 4.5L5 11.5L7.3 4.5H9.7L12 11.5L13.5 4.5" stroke="#fff" stroke-width="1.3" fill="none"/></svg>
 <svg class="abs" style="left:676.5px;top:5px" width="9" height="11" viewBox="2 1 13 15"><path d="M8.5 1.8C11.2 1.8 12.3 4 12.3 6.8C13.6 8.5 14.2 10.3 13.8 11.6C13.3 11.8 12.8 11 12.6 10.6C12.6 12.5 11.8 13.5 11 14C12 14.3 12.3 15 11.8 15.2H5.2C4.7 15 5 14.3 6 14C5.2 13.5 4.4 12.5 4.4 10.6C4.2 11 3.7 11.8 3.2 11.6C2.8 10.3 3.4 8.5 4.7 6.8C4.7 4 5.8 1.8 8.5 1.8Z" fill="#111"/><ellipse cx="8.5" cy="11.3" rx="2.8" ry="3" fill="#fff"/><path d="M5 8.6C7 9.8 10 9.8 12 8.6L12.2 9.8C10 11 7 11 4.8 9.8Z" fill="#e6312a"/><ellipse cx="7.3" cy="5.3" rx="0.9" ry="1.3" fill="#fff"/><ellipse cx="9.7" cy="5.3" rx="0.9" ry="1.3" fill="#fff"/><ellipse cx="8.5" cy="7.4" rx="2" ry="0.7" fill="#f5a623"/></svg>
 <svg class="abs" style="left:688.5px;top:7.5px" width="10" height="7" viewBox="0 0 10 7"><rect x="2" y="1.5" width="7.5" height="4.8" rx="0.8" fill="#f0f0f0"/><path d="M0.3 2.2L2.5 3.5V5L0.3 5.5Z" fill="#f0f0f0"/></svg>
 <svg class="abs" style="left:701.5px;top:6.5px" width="10" height="9" viewBox="0 0 10 9"><path d="M1 8.5L9 0.8V8.5Z" fill="none" stroke="#c8d0da" stroke-width="0.7"/><path d="M2 7.5C3 5.5 5 3.5 8 2.5M3.5 8C4.5 6.5 6 5.5 8.5 5" stroke="#c8d0da" stroke-width="0.7" fill="none"/></svg>
 <svg class="abs" style="left:714.5px;top:6.5px" width="10" height="9" viewBox="0 0 10 9"><path d="M0.5 3.2H2.5L4.8 1V8L2.5 5.8H0.5Z" fill="none" stroke="#fff" stroke-width="0.7"/><path d="M6.2 3A2 2 0 0 1 6.2 6M7.5 1.8A3.8 3.8 0 0 1 7.5 7.2" stroke="#aab4c2" stroke-width="0.6" fill="none"/></svg>
 <div class="t" style="left:727px;top:6.5px;font-size:7.5px;color:#fff">中</div>
 <div class="t" style="left:740px;top:2.5px;width:36px;text-align:center;font-size:7px;color:#fff">11:18</div>
 <div class="t" style="left:738px;top:11.5px;width:38px;text-align:center;font-size:7px;color:#fff">2021/11/22</div>
 <svg class="abs" style="left:783.5px;top:6px" width="9" height="9" viewBox="0 0 9 9"><path d="M0.6 0.6H8.4V6.4H4L2.2 8.2V6.4H0.6Z" fill="none" stroke="#9aa6b5" stroke-width="0.6"/></svg>
</div>

<!-- TIMER -->
<div class="abs" style="left:757px;top:11px;width:26px;height:26px;border-radius:50%;background:rgba(96,170,250,0.78);border:1.6px solid #dbe9fb;box-shadow:0 0 3px rgba(255,255,255,.8), inset 0 0 3px rgba(255,255,255,.5);color:#fff;font-size:7px;line-height:23px;text-align:center">00:17</div>
<!-- LOGO -->
<svg class="abs" style="left:695px;top:27px" width="36" height="37" viewBox="0 0 36 37">
 <defs><linearGradient id="lg" x1="0" y1="0" x2="1" y2="1"><stop offset="0" stop-color="#37a8ff"/><stop offset="1" stop-color="#0f6fe8"/></linearGradient></defs>
 <path d="M5.5 1.5H28Q32.5 1.5 32.5 6V26Q32.5 30.5 28 30.5H11.5L6.5 35.5L7.2 30.5H5.5Q1.5 30.5 1.5 26.5V5.5Q1.5 1.5 5.5 1.5Z" fill="url(#lg)"/>
 <path d="M1.8 7H21L11 18H4L10.5 11H1.8Z" fill="#fff"/>
 <path d="M32.2 25.5H8.5L19.5 13.5H29L22 21.5H32.2Z" fill="#fff"/>
</svg>
<div class="t" style="left:731.5px;top:33px;font-size:16px;color:#050505;letter-spacing:0.8px;font-weight:500">知百科</div>
<div class="t" style="left:732.5px;top:49px;font-size:6.1px;color:#050505;font-weight:bold;letter-spacing:2.6px">ZH BAIKE</div>
<!-- SUBTITLE -->
<div class="t" id="sub" style="left:329px;top:415.5px;font-size:21px;font-weight:500;color:#fff;letter-spacing:4.2px;-webkit-text-stroke:2.2px #000;paint-order:stroke fill;line-height:26px">然后点击删除</div>
</div>
</body>
</html>
